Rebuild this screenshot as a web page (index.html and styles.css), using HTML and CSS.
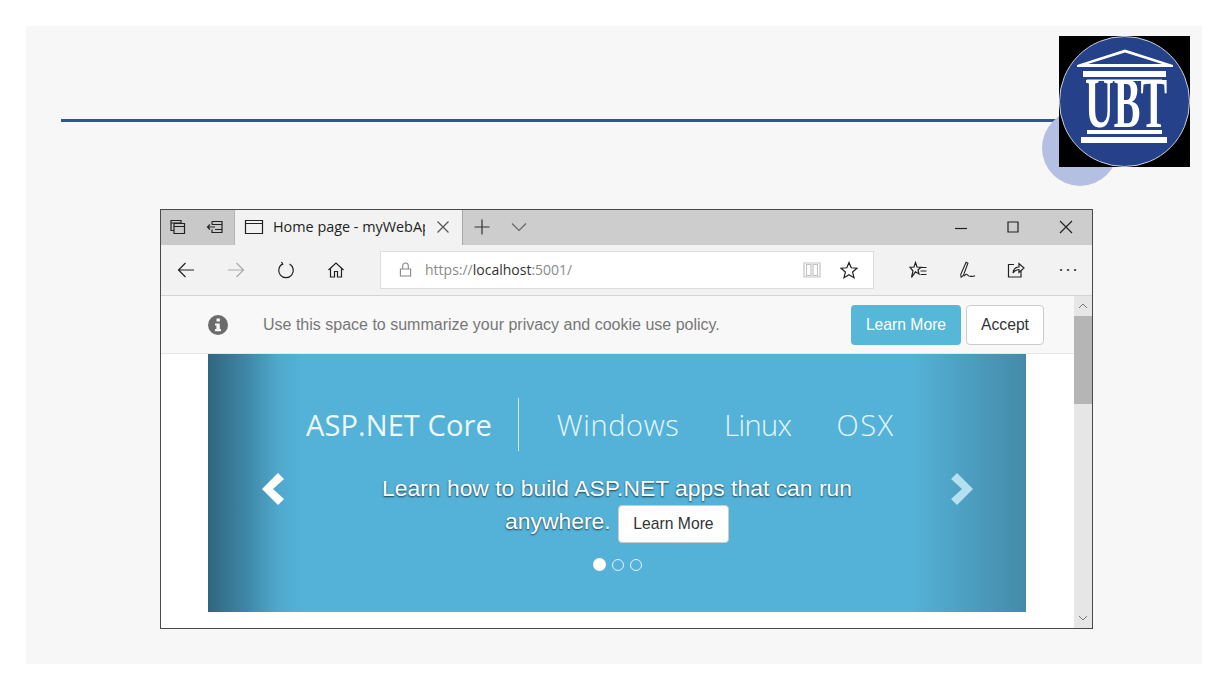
FILE: index.html
```html
<!DOCTYPE html>
<html>

<head>
  <title>Home page - myWebApp</title>
  <link rel="stylesheet" href="styles.css">
</head>

<body>
  <div class="slide">
    <div class="rule"></div>
    <div class="dot"></div>

    <svg class="logo" viewBox="0 0 131 131">
      <rect width="131" height="131" fill="#000" />
      <circle cx="65.5" cy="65.5" r="65" fill="#25418a" stroke="#c9cfdc" stroke-width="1" />
      <path fill-rule="evenodd" d="M66 13.5 L114 29 V31 H18 V29 Z M66 16.5 L29 28 H103 Z" fill="#fff" />
      <rect x="24" y="35" width="83" height="6" fill="#fff" />
      <rect x="28" y="43.5" width="75" height="1.5" fill="#fff" />
      <text class="logo-text" x="0" y="0" text-anchor="middle" transform="translate(67 91) scale(1 1.8)">UBT</text>
      <rect x="28" y="94" width="75" height="4" fill="#fff" />
      <rect x="22" y="101" width="86" height="6" fill="#fff" />
    </svg>

    <div class="window">
      <div class="tabstrip">
        <div class="tab-tools">
          <svg class="icon" viewBox="0 0 18 18">
            <path d="M2 2.5 H12 V5 H2 Z M2 5 V12.5 H5 M5 5.5 H15.5 V15.5 H5 Z M5 8.5 H15.5" />
          </svg>
          <svg class="icon" viewBox="0 0 18 18">
            <path d="M6 3.5 H16 V14.5 H6 V11.5 M6 6.5 V3.5 M6 6.5 H16 M9 9 H1.5 M4 6.5 L1.5 9 L4 11.5 M9 11.5 H16" />
          </svg>
        </div>
        <div class="tab">
          <svg class="icon tab-icon" viewBox="0 0 20 18">
            <path d="M1.5 2.5 H18.5 V15.5 H1.5 Z M1.5 5.5 H18.5" />
          </svg>
          <span class="tab-title">Home page - myWebApp</span>
          <svg class="icon tab-close" viewBox="0 0 14 14">
            <path d="M1.5 1.5 L12.5 12.5 M12.5 1.5 L1.5 12.5" />
          </svg>
        </div>
        <svg class="icon new-tab" viewBox="0 0 18 18">
          <path d="M9 1.5 V16.5 M1.5 9 H16.5" />
        </svg>
        <svg class="icon tab-list" viewBox="0 0 16 10">
          <path d="M1 1.5 L8 8.5 L15 1.5" />
        </svg>
        <div class="caption-btns">
          <svg class="icon" viewBox="0 0 12 12">
            <path d="M0 7.5 H12" />
          </svg>
          <svg class="icon" viewBox="0 0 12 12">
            <path d="M1 1 H11 V11 H1 Z" />
          </svg>
          <svg class="icon" viewBox="0 0 14 14">
            <path d="M1 1 L13 13 M13 1 L1 13" />
          </svg>
        </div>
      </div>

      <div class="toolbar">
        <div class="nav-btns">
          <svg class="icon" viewBox="0 0 18 16">
            <path d="M17 8 H1.5 M8.5 1 L1.5 8 L8.5 15" />
          </svg>
          <svg class="icon icon-off" viewBox="0 0 18 16">
            <path d="M1 8 H16.5 M9.5 1 L16.5 8 L9.5 15" />
          </svg>
          <svg class="icon" viewBox="0 0 18 18">
            <path d="M5.5 3 A7.3 7.3 0 1 0 12.5 3 M4.5 1 L5.8 3.2 L3.2 4.4" />
          </svg>
          <svg class="icon" viewBox="0 0 18 18">
            <path d="M1.5 9 L9 2 L16.5 9 M3.5 7.5 V16 H7.5 V10.5 H10.5 V16 H14.5 V7.5" />
          </svg>
        </div>
        <div class="address">
          <svg class="icon lock" viewBox="0 0 14 16">
            <path d="M1.5 7.5 H12.5 V15 H1.5 Z M4 7.5 V4 A3 3 0 0 1 10 4 V7.5" />
          </svg>
          <span class="url"><span class="url-dim">https://</span>localhost<span class="url-dim">:5001/</span></span>
          <svg class="icon reading" viewBox="0 0 18 16">
            <path d="M1 1 H17 V15 H1 Z M3.5 2.5 H8 V13.5 H3.5 Z M10 2.5 H14.5 V13.5 H10 Z" />
          </svg>
          <svg class="icon fav" viewBox="0 0 18 18">
            <path d="M9 1.5 L11.2 6.8 L17 7.2 L12.6 11 L14 16.7 L9 13.7 L4 16.7 L5.4 11 L1 7.2 L6.8 6.8 Z" />
          </svg>
        </div>
        <div class="tool-btns">
          <svg class="icon" viewBox="0 0 18 18">
            <path d="M6.5 1.5 L8 6 L12 6.3 L9 9 L10 13 L6.5 10.8 L2.5 16.5 L4 10 L1 6.3 L5 6 Z M11 6.5 H17.5 M11.5 10 H17.5 M11.5 13.5 H17.5" />
          </svg>
          <svg class="icon" viewBox="0 0 20 18">
            <path d="M9 0.5 L11 1.5 L6 15 L3.5 17 L3 14 Z M7 16 C9.5 11 11 16 13 16 C15 16 16 16.5 19 15.5" />
          </svg>
          <svg class="icon" viewBox="0 0 18 18">
            <path d="M7 3.5 H1.5 V16 H14 V10 M6 12 C6.5 8 9 6 12 6 V2.5 L17 7 L12 11.5 V8.5 C9.5 8.5 7.5 9.5 6 12 Z" />
          </svg>
          <div class="more">&middot;&middot;&middot;</div>
        </div>
      </div>

      <div class="viewport">
        <div class="page">
          <div class="cookie">
            <svg class="info" viewBox="0 0 20 20">
              <circle cx="10" cy="10" r="10" fill="#6b6b6b" />
              <rect x="8.5" y="3.5" width="3.4" height="3" fill="#f8f8f8" />
              <path d="M7 8.5 H11.8 V14 H13 V16.2 H7 V14 H8.4 V10.6 H7 Z" fill="#f8f8f8" />
            </svg>
            <span class="cookie-text">Use this space to summarize your privacy and cookie use policy.</span>
            <a class="btn btn-info">Learn More</a>
            <a class="btn btn-plain">Accept</a>
          </div>
          <div class="banner">
            <svg class="arrow arrow-left" viewBox="0 0 24 34">
              <path d="M17 1 L23 7 L12 17 L23 27 L17 33 L1 17 Z" fill="#fff" />
            </svg>
            <svg class="arrow arrow-right" viewBox="0 0 24 34">
              <path d="M7 1 L1 7 L12 17 L1 27 L7 33 L23 17 Z" fill="#b5e0f0" />
            </svg>
            <div class="banner-logo">
              <span class="core">ASP.NET Core</span>
              <span class="divider"></span>
              <span class="os os-windows">Windows</span>
              <span class="os os-linux">Linux</span>
              <span class="os os-osx">OSX</span>
            </div>
            <div class="banner-caption">
              Learn how to build ASP.NET apps that can run<br>
              anywhere. <a class="btn btn-plain btn-caption">Learn More</a>
            </div>
            <div class="dots">
              <span class="pip pip-on"></span>
              <span class="pip"></span>
              <span class="pip"></span>
            </div>
          </div>
        </div>
        <div class="scrollbar">
          <svg class="scroll-arrow" viewBox="0 0 10 6">
            <path d="M1 5 L5 1 L9 5" />
          </svg>
          <div class="thumb"></div>
          <svg class="scroll-arrow scroll-down" viewBox="0 0 10 6">
            <path d="M1 1 L5 5 L9 1" />
          </svg>
        </div>
      </div>
    </div>
  </div>
</body>

</html>
```

FILE: styles.css
```css
html,
body {
  margin: 0;
  background: #fff;
}

body {
  width: 1227px;
  height: 690px;
  overflow: hidden;
  padding: 26px 25px 26px 26px;
  box-sizing: border-box;
  font-family: "Liberation Sans", Arial, sans-serif;
}

.slide {
  position: relative;
  width: 1176px;
  height: 638px;
  padding: 93px 0 0 35px;
  box-sizing: border-box;
  background: #f7f7f7;
}

.rule {
  width: 1000px;
  height: 3px;
  background: #2f5597;
}

.dot {
  position: absolute;
  left: 1016px;
  top: 84px;
  width: 76px;
  height: 76px;
  border-radius: 50%;
  background: #b4c0e2;
}

.logo {
  position: absolute;
  left: 1033px;
  top: 10px;
  width: 131px;
  height: 131px;
}

.logo-text {
  font-family: "Liberation Serif", serif;
  font-weight: bold;
  font-size: 40px;
  fill: #fff;
}

.window {
  width: 933px;
  height: 420px;
  margin: 87px 0 0 99px;
  border: 1px solid #4a4a4a;
  box-sizing: border-box;
  display: flex;
  flex-direction: column;
  background: #fff;
}

.icon {
  fill: none;
  stroke: #222;
  stroke-width: 1.2;
  flex: none;
}

/* tab strip */

.tabstrip {
  display: flex;
  align-items: center;
  height: 35px;
  background: #cdcdcd;
  flex: none;
}

.tab-tools {
  display: flex;
  align-items: center;
  gap: 19px;
  height: 100%;
  width: 73px;
  padding: 0 0 2px 8px;
  box-sizing: border-box;
  background: #c9c9c9;
}

.tab-tools .icon {
  width: 18px;
  height: 18px;
}

.tab {
  display: flex;
  align-items: center;
  height: 100%;
  width: 229px;
  box-sizing: border-box;
  padding: 0 12px 2px 9px;
  background: #f2f2f2;
  border-left: 1px solid #b5b5b5;
  border-right: 1px solid #a8a8a8;
}

.tab-icon {
  width: 20px;
  height: 18px;
}

.tab-title {
  width: 153px;
  margin: 0 11px 0 9px;
  overflow: hidden;
  white-space: nowrap;
  font: 14.4px "Open Sans", sans-serif;
  color: #222;
}

.tab-close {
  width: 14px;
  height: 14px;
  stroke: #555;
}

.new-tab {
  width: 18px;
  height: 18px;
  margin: 0 0 2px 10px;
  stroke: #333;
}

.tab-list {
  width: 16px;
  height: 10px;
  margin: 0 0 2px 20px;
  stroke: #666;
}

.caption-btns {
  display: flex;
  align-items: center;
  gap: 40px;
  margin: 0 19px 2px auto;
}

.caption-btns .icon {
  width: 12px;
  height: 12px;
}

.caption-btns .icon:last-child {
  width: 14px;
  height: 14px;
}

/* toolbar */

.toolbar {
  display: flex;
  align-items: center;
  height: 51px;
  box-sizing: border-box;
  padding-bottom: 1px;
  background: #f2f2f2;
  border-bottom: 1px solid #d4d4d4;
  flex: none;
}

.nav-btns {
  display: flex;
  align-items: center;
  gap: 32px;
  width: 219px;
  padding-left: 16px;
  box-sizing: border-box;
  flex: none;
}

.nav-btns .icon {
  width: 18px;
  height: 18px;
}

.icon-off {
  stroke: #aaa;
}

.address {
  display: flex;
  align-items: center;
  width: 494px;
  height: 38px;
  padding: 0 15px 0 18px;
  box-sizing: border-box;
  background: #fff;
  border: 1px solid #dcdcdc;
  flex: none;
}

.lock {
  width: 13px;
  height: 15px;
  stroke: #888;
}

.url {
  margin-left: 13px;
  font: 14px "Open Sans", sans-serif;
  color: #333;
}

.url-dim {
  color: #8a8a8a;
}

.reading {
  width: 18px;
  height: 16px;
  margin-left: auto;
  stroke: #c4c4c4;
}

.fav {
  width: 18px;
  height: 18px;
  margin-left: 19px;
}

.tool-btns {
  display: flex;
  align-items: center;
  gap: 31px;
  padding-left: 35px;
}

.tool-btns .icon {
  width: 18px;
  height: 18px;
}

.more {
  width: 18px;
  margin-left: 2px;
  font-size: 18px;
  letter-spacing: 1px;
  color: #333;
}

/* page */

.viewport {
  display: flex;
  flex: 1;
  min-height: 0;
}

.page {
  flex: 1;
  min-width: 0;
}

.cookie {
  display: flex;
  align-items: center;
  height: 58px;
  box-sizing: border-box;
  padding: 0 30px 0 47px;
  background: #f8f8f8;
  border-bottom: 1px solid #e7e7e7;
}

.info {
  width: 20px;
  height: 20px;
  flex: none;
}

.cookie-text {
  margin-left: 35px;
  font-size: 16px;
  color: #777;
}

.btn {
  display: inline-block;
  box-sizing: border-box;
  font-size: 15.7px;
  line-height: 38px;
  height: 40px;
  text-align: center;
  border-radius: 4px;
  border: 1px solid transparent;
}

.btn-info {
  width: 110px;
  margin-left: auto;
  background: #56b7d9;
  color: #fff;
}

.btn-plain {
  width: 78px;
  margin-left: 5px;
  background: #fff;
  border-color: #ccc;
  color: #333;
}

.banner {
  position: relative;
  height: 258px;
  margin: 0 48px 0 47px;
  display: flex;
  flex-direction: column;
  align-items: center;
  color: #fff;
  background:
    linear-gradient(to right, #2f667f 0, rgba(47, 102, 127, 0.55) 40px, rgba(47, 102, 127, 0.12) 70px, rgba(47, 102, 127, 0) 95px),
    linear-gradient(to left, #458aa8 0, rgba(69, 138, 168, 0) 115px),
    #54b2d8;
}

.arrow {
  position: absolute;
  top: 118px;
  width: 24px;
  height: 34px;
}

.arrow-left {
  left: 53px;
}

.arrow-right {
  right: 52px;
}

.banner-logo {
  display: flex;
  align-items: center;
  width: 100%;
  height: 53px;
  margin-top: 44px;
  padding-left: 98px;
  box-sizing: border-box;
  font: 300 29px "Open Sans", sans-serif;
  color: #e6f6fb;
}

.core {
  font-weight: 400;
  letter-spacing: 0.1px;
  color: #eef9fc;
}

.divider {
  width: 1px;
  height: 53px;
  margin: 0 38px 0 26px;
  background: #cfeaf4;
}

.os-windows {
  letter-spacing: 0.6px;
}

.os-linux {
  margin-left: 45px;
  letter-spacing: -0.6px;
}

.os-osx {
  margin-left: 45px;
  letter-spacing: 1.6px;
}

.banner-caption {
  margin-top: 21px;
  text-align: center;
  font-size: 22.9px;
  line-height: 33px;
  text-shadow: 0 1px 2px rgba(0, 0, 0, 0.7);
}

.btn-caption {
  width: 111px;
  height: 38px;
  line-height: 36px;
  margin-left: 1px;
  vertical-align: 0;
  text-shadow: none;
}

.dots {
  display: flex;
  align-items: center;
  gap: 6px;
  margin-top: 15px;
}

.pip {
  width: 10px;
  height: 10px;
  border: 1px solid #e4f5fb;
  border-radius: 50%;
}

.pip-on {
  width: 13px;
  height: 13px;
  border: 0;
  background: #fff;
}

.scrollbar {
  display: flex;
  flex-direction: column;
  align-items: center;
  width: 18px;
  background: #e6e6e6;
  flex: none;
}

.scroll-arrow {
  width: 10px;
  height: 6px;
  margin: 7px 0;
  fill: none;
  stroke: #777;
  flex: none;
}

.scroll-down {
  margin-top: auto;
}

.thumb {
  width: 100%;
  height: 88px;
  background: #b5b5b5;
}
```
